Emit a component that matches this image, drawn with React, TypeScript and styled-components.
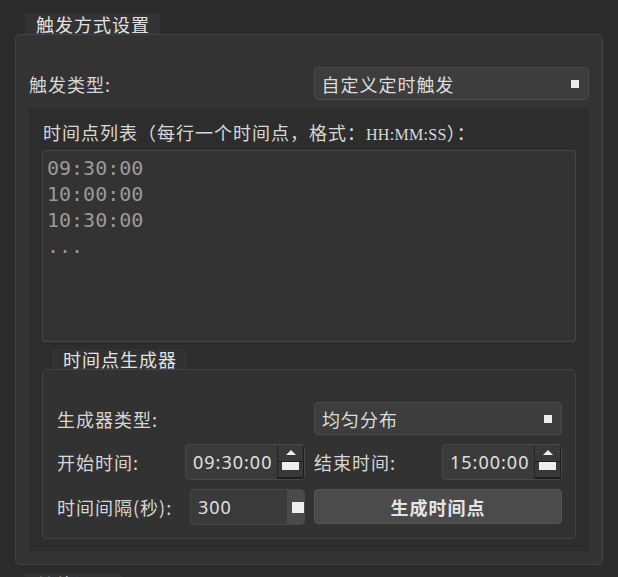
import React from 'react';
import styled, { createGlobalStyle } from 'styled-components';

const GlobalStyle = createGlobalStyle`
  html, body {
    margin: 0;
    padding: 0;
    background: #2b2b2b;
  }
  body {
    font-family: "Noto Sans CJK SC", "Noto Sans", sans-serif;
    color: #d8d8d8;
    overflow: hidden;
  }
  * {
    box-sizing: border-box;
  }
`;

const Page = styled.div`
  width: 603px;
  padding: 14px 0 0 15px;
`;

const GroupTitle = styled.div<{ $inset: number; $bg: string }>`
  width: fit-content;
  height: 20px;
  margin-left: ${p => p.$inset}px;
  padding: 0 10px 0 11px;
  background: ${p => p.$bg};
  font-size: 18px;
  line-height: 20px;
  letter-spacing: 1px;
  color: #e2e2e2;
  white-space: nowrap;
`;

const GroupBox = styled.div`
  border: 1px solid #434343;
  border-radius: 5px;
  background: #333333;
  padding: 32px 13px 13px;
`;

const FieldRow = styled.div<{ $align?: string }>`
  display: grid;
  grid-template-columns: 1fr 1fr;
  column-gap: 9px;
  align-items: ${p => p.$align || 'center'};
`;

const Cell = styled.div`
  display: flex;
  align-items: center;
  justify-content: space-between;
`;

const Label = styled.span`
  font-size: 18px;
  letter-spacing: 1px;
  color: #d6d6d6;
  white-space: nowrap;
`;

const Combo = styled.div`
  height: 33px;
  display: flex;
  align-items: center;
  justify-content: space-between;
  padding: 0 9px 0 7px;
  background: #3d3d3d;
  border: 1px solid #4a4a4a;
  border-radius: 4px;
  font-size: 18px;
  letter-spacing: 1px;
  color: #dcdcdc;
`;

const ComboArrow = styled.span`
  width: 8px;
  height: 8px;
  background: #ececec;
`;

const Panel = styled.div`
  margin-top: 9px;
  background: #2d2d2d;
  padding: 10px 13px 12px;
`;

const ListLabel = styled.div`
  height: 26px;
  line-height: 26px;
  padding-left: 1px;
  margin-bottom: 5px;
  font-size: 18px;
  letter-spacing: 1px;
  color: #d8d8d8;
  white-space: nowrap;
`;

const Latin = styled.span`
  font-family: "Liberation Serif", serif;
  font-size: 16px;
  letter-spacing: 0.3px;
`;

const ListBox = styled.div`
  height: 192px;
  padding: 4px 4px;
  background: #333333;
  border: 1px solid #474747;
  border-radius: 3px;
  font-family: "DejaVu Sans Mono", monospace;
  font-size: 20px;
  line-height: 26px;
  color: #9a9a9a;
`;

const GenTitleWrap = styled.div`
  margin-top: 7px;
`;

const GenBox = styled.div`
  display: flex;
  flex-direction: column;
  gap: 9px;
  border: 1px solid #434343;
  border-radius: 5px;
  background: #323232;
  padding: 32px 13px 13px 14px;
`;

const SpinBox = styled.div<{ $width: number }>`
  width: ${p => p.$width}px;
  height: 36px;
  display: flex;
  overflow: hidden;
  background: #3a3a3a;
  border: 1px solid #474747;
  border-radius: 4px;
`;

const SpinText = styled.div`
  flex: 1;
  padding-left: 7px;
  font-family: "Noto Sans", sans-serif;
  font-size: 18px;
  line-height: 34px;
  letter-spacing: 1px;
  color: #e0e0e0;
`;

const SpinButtons = styled.div`
  width: 27px;
  display: flex;
  flex-direction: column;
  border-left: 1px solid #252525;
`;

const UpButton = styled.div`
  height: 17px;
  display: flex;
  justify-content: center;
  padding-top: 5px;
  border-bottom: 1px solid #1d1d1d;
  border-right: 1px solid #1d1d1d;
  background: #393939;
`;

const UpArrow = styled.span`
  width: 0;
  height: 0;
  border-left: 5px solid transparent;
  border-right: 5px solid transparent;
  border-bottom: 5px solid #eeeeee;
`;

const DownButton = styled.div`
  flex: 1;
  display: flex;
  justify-content: center;
  border-bottom: 2px solid #1d1d1d;
  border-right: 1px solid #1d1d1d;
  background: #393939;
`;

const DownBlock = styled.span`
  width: 17px;
  height: 8px;
  background: #eeeeee;
`;

const SpinSide = styled.div`
  width: 17px;
  display: flex;
  align-items: center;
  padding-left: 5px;
  background: #4a4a4a;
`;

const SideBlock = styled.span`
  width: 12px;
  height: 11px;
  flex-shrink: 0;
  background: #eeeeee;
`;

const ActionButton = styled.button`
  height: 35px;
  padding: 0;
  background: #4b4b4b;
  border: 1px solid #555555;
  border-radius: 4px;
  font-family: "Noto Sans CJK SC", sans-serif;
  font-size: 18px;
  font-weight: 700;
  letter-spacing: 1px;
  color: #e4e4e4;
`;

const NextTitleWrap = styled.div`
  margin-top: 9px;
`;

const TimeSpin: React.FC<{ value: string }> = ({ value }) => (
  <SpinBox $width={120}>
    <SpinText>{value}</SpinText>
    <SpinButtons>
      <UpButton>
        <UpArrow />
      </UpButton>
      <DownButton>
        <DownBlock />
      </DownButton>
    </SpinButtons>
  </SpinBox>
);

const times = ['09:30:00', '10:00:00', '10:30:00', '...'];

export default function App() {
  return (
    <>
      <GlobalStyle />
      <Page>
        <GroupTitle $inset={10} $bg="#333333">触发方式设置</GroupTitle>
        <GroupBox>
          <FieldRow>
            <Label>触发类型:</Label>
            <Combo>
              <span>自定义定时触发</span>
              <ComboArrow />
            </Combo>
          </FieldRow>

          <Panel>
            <ListLabel>
              时间点列表（每行一个时间点，格式：<Latin>HH:MM:SS</Latin>）：
            </ListLabel>
            <ListBox>
              {times.map(t => (
                <div key={t}>{t}</div>
              ))}
            </ListBox>

            <GenTitleWrap>
              <GroupTitle $inset={10} $bg="#323232">时间点生成器</GroupTitle>
            </GenTitleWrap>
            <GenBox>
              <FieldRow>
                <Label>生成器类型:</Label>
                <Combo>
                  <span>均匀分布</span>
                  <ComboArrow />
                </Combo>
              </FieldRow>
              <FieldRow>
                <Cell>
                  <Label>开始时间:</Label>
                  <TimeSpin value="09:30:00" />
                </Cell>
                <Cell>
                  <Label>结束时间:</Label>
                  <TimeSpin value="15:00:00" />
                </Cell>
              </FieldRow>
              <FieldRow $align="start">
                <Cell>
                  <Label>时间间隔(秒):</Label>
                  <SpinBox $width={115}>
                    <SpinText>300</SpinText>
                    <SpinSide>
                      <SideBlock />
                    </SpinSide>
                  </SpinBox>
                </Cell>
                <ActionButton>生成时间点</ActionButton>
              </FieldRow>
            </GenBox>
          </Panel>
        </GroupBox>
        <NextTitleWrap>
          <GroupTitle $inset={10} $bg="#333333">其他设置</GroupTitle>
        </NextTitleWrap>
      </Page>
    </>
  );
}
